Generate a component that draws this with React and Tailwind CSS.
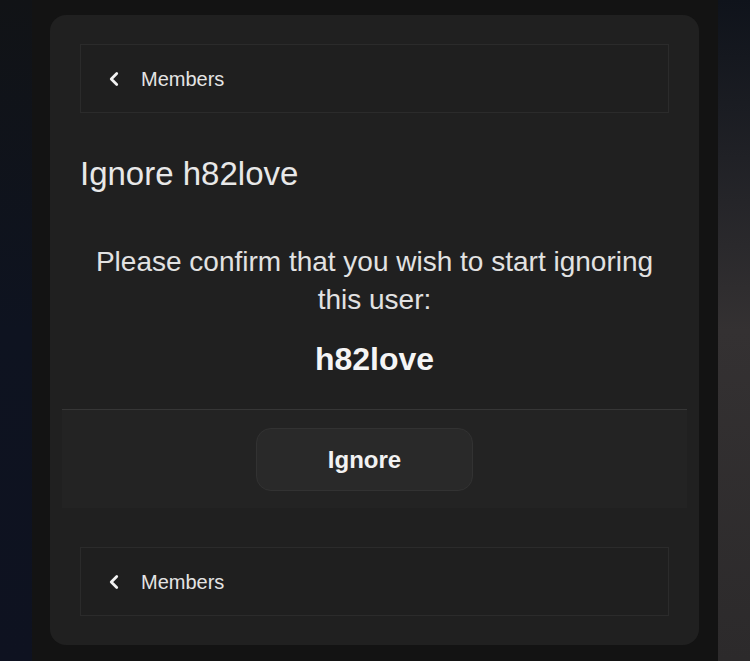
import { ChevronLeft } from 'lucide-react'

function NavBack() {
  return (
    <div className="flex h-[69px] items-center border border-[#2b2b2b] bg-[#1f1f1f] pl-[22px] mx-[18px]">
      <ChevronLeft size={22} strokeWidth={3} className="text-[#f2f2f2]" />
      <span className="ml-4 text-[20px] leading-none text-[#e4e4e4]">Members</span>
    </div>
  )
}

export default function App() {
  return (
    <div className="flex h-[661px] w-[750px] overflow-hidden bg-[#131313] font-['Liberation_Sans',Arial,sans-serif]">
      <div className="w-8 shrink-0 bg-gradient-to-b from-[#111316] via-[#0e1320] to-[#0e1220]" />
      <div className="flex-1 pl-[18px] pr-[19px] pt-[15px]">
        <div className="flex h-[630px] flex-col rounded-2xl bg-[#202020] px-3 pt-[29px]">
          <NavBack />

          <h1 className="mx-[18px] mt-[41px] text-[33px] leading-[40px] text-[#e8e8e8]">Ignore h82love</h1>

          <p className="mt-[49px] px-[18px] text-center text-[28px] leading-[38px] text-[#e2e2e2]">
            Please confirm that you wish to start ignoring this user:
          </p>
          <p className="mt-5 text-center text-[32px] font-bold leading-[40px] text-[#f5f5f5]">h82love</p>

          <div className="mt-[30px] border-t border-[#363636] bg-[#232323] pb-[17px] pl-[194px] pt-[18px]">
            <button className="h-[63px] w-[217px] rounded-[15px] border border-[#323232] bg-[#292929] text-[24px] font-bold text-[#f2f2f2]">
              Ignore
            </button>
          </div>

          <div className="mt-[39px]">
            <NavBack />
          </div>
        </div>
      </div>
      <div className="w-8 shrink-0 bg-gradient-to-b from-[#0f131b] via-[#343132] via-[50%] to-[#2c2a2b]" />
    </div>
  )
}
